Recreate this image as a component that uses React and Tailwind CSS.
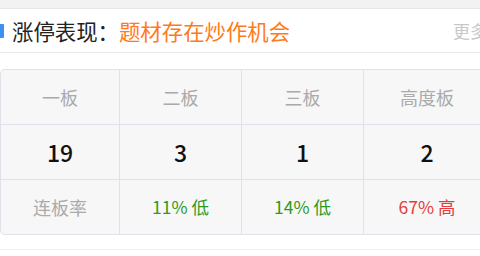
export default function App() {
  const font = { fontFamily: '"Noto Sans CJK SC", "Noto Sans", sans-serif' };
  const heads = ["一板", "二板", "三板", "高度板"];
  const nums = ["19", "3", "1", "2"];
  const rates = [
    { t: "11% 低", c: "text-[#2f9a22]" },
    { t: "14% 低", c: "text-[#2f9a22]" },
    { t: "67% 高", c: "text-[#e43c3c]" },
  ];
  return (
    <div className="w-[480px] h-[256px] overflow-hidden bg-white" style={font}>
      <div className="h-[9px] bg-[#f2f2f2] border-b border-[#e6e6e6]" />
      <div className="h-[44px] flex items-center border-b border-[#e8e8e8] relative">
        <div className="w-[4px] h-[14px] bg-[#3d8ff2] rounded-r-[1px]" />
        <span className="ml-[8px] text-[21.4px] leading-none text-[#222]">涨停表现：</span>
        <span className="text-[21.4px] leading-none text-[#ff7a1a]">题材存在炒作机会</span>
        <span className="ml-auto mr-[-7px] text-[17px] leading-none text-[#c8c8c8]">更多</span>
      </div>
      <div className="mt-[16px] w-[490px] bg-[#f7f7f7] border border-r-0 border-[#e2e1ea] rounded-l-[5px]">
        <div className="grid grid-cols-[119px_122px_122px_1fr] h-[55px] border-b border-[#e2e1ea]">
          {heads.map((h, i) => (
            <div key={i} className={`flex items-center justify-center text-[18px] text-[#aaaaaa] ${i < 3 ? "border-r border-[#e2e1ea]" : ""}`}>{h}</div>
          ))}
        </div>
        <div className="grid grid-cols-[119px_122px_122px_1fr] h-[55px] border-b border-[#e2e1ea]">
          {nums.map((n, i) => (
            <div key={i} className={`flex items-center justify-center text-[23px] font-medium text-[#111] ${i < 3 ? "border-r border-[#e2e1ea]" : ""}`}>{n}</div>
          ))}
        </div>
        <div className="grid grid-cols-[119px_122px_122px_1fr] h-[54px]">
          <div className="flex items-center justify-center text-[18px] text-[#aaaaaa] border-r border-[#e2e1ea]">连板率</div>
          {rates.map((r, i) => (
            <div key={i} className={`flex items-center justify-center text-[17.5px] ${r.c} ${i < 2 ? "border-r border-[#e2e1ea]" : ""}`}>{r.t}</div>
          ))}
        </div>
      </div>
      <div className="mt-[14px] border-t border-[#eeeeee]" />
    </div>
  );
}
